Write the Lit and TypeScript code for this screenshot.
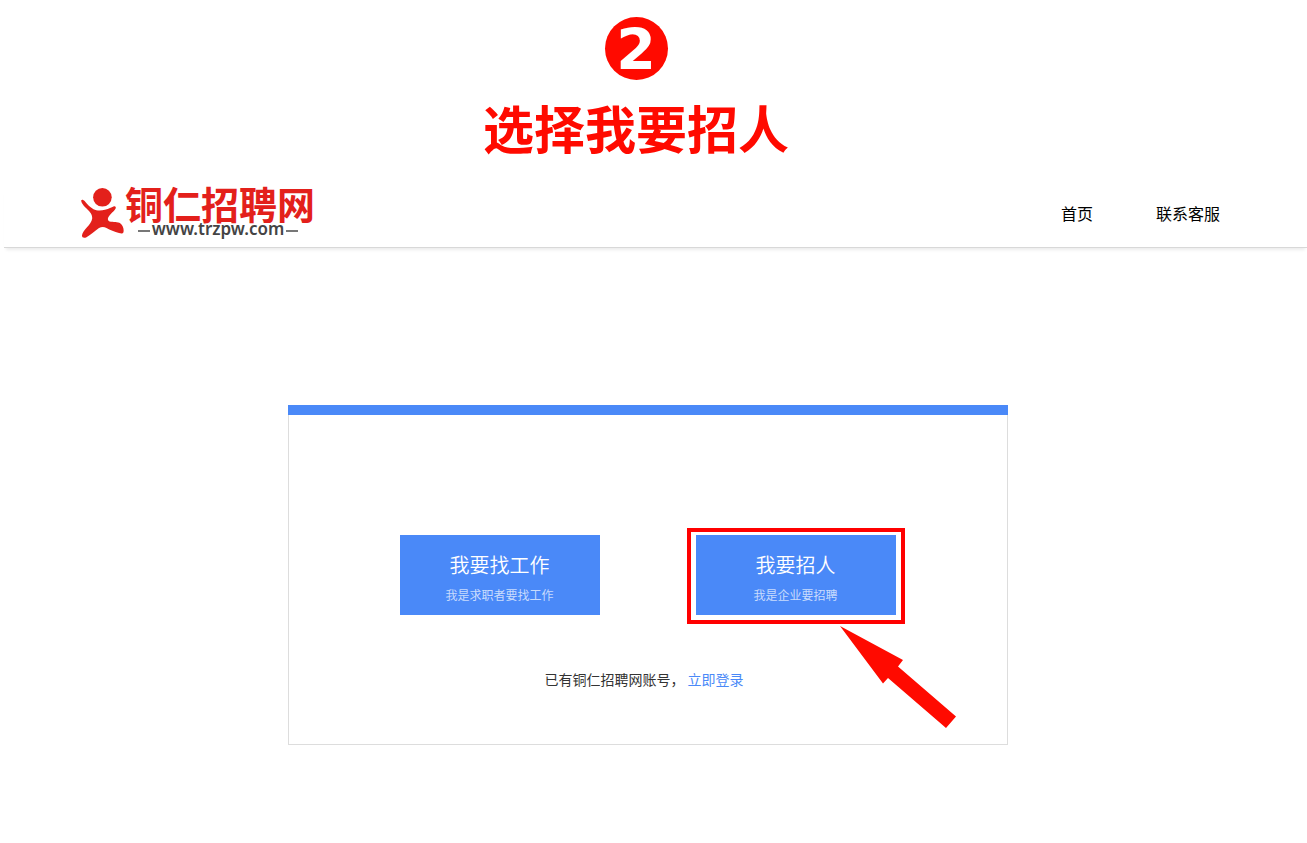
import { LitElement, html, css } from "lit";
import { customElement, property } from "lit/decorators.js";

const FONT = css`"Noto Sans CJK SC", "Liberation Sans", sans-serif`;

/** Red and grey brand mark shown at the left of the site header. */
@customElement("site-logo")
class SiteLogo extends LitElement {
  static styles = css`
    a {
      display: flex;
      align-items: flex-start;
      color: #e3201b;
      text-decoration: none;
      font-family: ${FONT};
    }
    svg {
      flex: none;
      display: block;
    }
    .words {
      display: flex;
      flex-direction: column;
      align-items: center;
      gap: 4px;
    }
    .name {
      font-size: 38px;
      line-height: 32px;
      font-weight: 700;
    }
    .domain {
      display: flex;
      align-items: center;
      gap: 2px;
      padding-right: 4px;
      font-family: "Noto Sans", sans-serif;
      font-size: 17px;
      line-height: 12px;
      font-weight: 600;
      color: #444;
    }
    .dash {
      width: 12px;
      height: 2px;
      margin-top: 4px;
      background: #777;
    }
  `;

  render() {
    return html`
      <a href="#" aria-label="铜仁招聘网">
        <svg width="44" height="52" viewBox="0 0 44 52" aria-hidden="true">
          <circle cx="21.400" cy="10.300" r="9.300" fill="#e3201b" />
          <path
            fill="#e3201b"
            d="M0.200 13.300C1 12 2.500 12.800 3.600 14C6.500 17.300 9 20.400 12.500 22.200C15.500 23.700 20 23.700 24 22.800C28 21.900 30.500 20.200 32.500 19.500C34.400 18.900 35.400 20.200 34.500 21.700C32.500 25 27.800 27.800 26.900 31.500C26.600 33.500 27.800 34.600 30 34.800C34 35.100 38 34.600 40.500 37.500C42.300 39.500 43 43 42.500 45.200C41.500 47 40 46.400 38 46C33.500 44.900 29 43 25.500 41C23 39.600 20.500 39.600 18 41C13.500 44 9.500 48 5.500 50.200C3 51.300 0.700 50.600 1 48.200C1.400 45.500 3.600 43 6 40.200C8.500 37.500 10.800 34.600 11.200 31.500C11.500 27.500 9 25 5.800 21.800C3 18.900 0.200 16.500 0.200 13.300Z"
          />
        </svg>
        <span class="words">
          <span class="name">铜仁招聘网</span>
          <span class="domain">
            <span class="dash"></span>www.trzpw.com<span class="dash"></span>
          </span>
        </span>
      </a>
    `;
  }
}

/** Large blue button with a title and a smaller explanation. */
@customElement("role-button")
class RoleButton extends LitElement {
  @property() heading = "";
  @property() note = "";

  static styles = css`
    :host {
      display: block;
    }
    button {
      display: flex;
      flex-direction: column;
      align-items: center;
      gap: 5px;
      width: 200px;
      height: 80px;
      padding: 15px 1px 0 0;
      border: 0;
      background: #4a89f8;
      color: #fff;
      font-family: ${FONT};
      cursor: pointer;
    }
    .heading {
      font-size: 20px;
      line-height: 30px;
      font-weight: 350;
    }
    .note {
      font-size: 12px;
      line-height: 20px;
      color: #c8dbfd;
    }
  `;

  render() {
    return html`
      <button type="button">
        <span class="heading">${this.heading}</span>
        <span class="note">${this.note}</span>
      </button>
    `;
  }
}

@customElement("app-root")
class AppRoot extends LitElement {
  static styles = css`
    :host {
      display: block;
      min-height: 100vh;
      background: #fff;
      color: #000;
      font-family: ${FONT};
    }
    .step {
      display: flex;
      flex-direction: column;
      align-items: center;
      padding: 17px 35px 0 0;
      color: #ff0a00;
    }
    .number {
      box-sizing: border-box;
      width: 63px;
      height: 63px;
      padding-top: 2px;
      border-radius: 50%;
      background: #ff0a00;
      color: #fff;
      font-family: "DejaVu Sans", sans-serif;
      font-size: 57px;
      line-height: 63px;
      font-weight: 700;
      text-align: center;
    }
    h1 {
      margin: 11px 0 0;
      font-size: 51px;
      line-height: 72px;
      font-weight: 700;
    }
    header {
      display: flex;
      justify-content: space-between;
      align-items: flex-start;
      height: 60px;
      margin: 24px 0 0 4px;
      padding: 0 87px 0 77px;
      border-bottom: 1px solid #d8d8d8;
      box-shadow: 0 4px 3px -2px rgba(0, 0, 0, 0.08);
    }
    nav {
      display: flex;
      gap: 63px;
      padding-top: 14px;
    }
    nav a {
      color: #000;
      font-size: 16px;
      line-height: 24px;
      text-decoration: none;
    }
    main {
      padding: 157px 11px 98px 0;
    }
    .panel {
      max-width: 720px;
      margin: 0 auto;
    }
    .bar {
      height: 10px;
      background: #4a89f8;
    }
    .card {
      padding-bottom: 53px;
      border: 1px solid #ddd;
      border-top: 0;
    }
    .roles {
      display: flex;
      justify-content: center;
      gap: 96px;
      padding-top: 120px;
    }
    .picked {
      position: relative;
    }
    .frame {
      position: absolute;
      inset: -7px -9px -9px -9px;
      border: 4px solid #f00;
      pointer-events: none;
    }
    .arrow {
      position: absolute;
      left: 144px;
      top: 91px;
    }
    .login {
      margin: 52px 8px 0 0;
      color: #333;
      font-size: 14px;
      line-height: 24px;
      text-align: center;
    }
    .login a {
      color: #4a89f8;
      text-decoration: none;
    }
  `;

  render() {
    return html`
      <section class="step">
        <div class="number">2</div>
        <h1>选择我要招人</h1>
      </section>
      <header>
        <site-logo></site-logo>
        <nav>
          <a href="#">首页</a>
          <a href="#">联系客服</a>
        </nav>
      </header>
      <main>
        <div class="panel">
          <div class="bar"></div>
          <div class="card">
            <div class="roles">
              <role-button heading="我要找工作" note="我是求职者要找工作"></role-button>
              <div class="picked">
                <role-button heading="我要招人" note="我是企业要招聘"></role-button>
                <div class="frame"></div>
                <svg class="arrow" width="117" height="103" viewBox="0 0 117 103" aria-hidden="true">
                  <path fill="#ff0a00" d="M0 0L63 34L58 40.500L116 90.500L106 102L48 52L43 57.500Z" />
                </svg>
              </div>
            </div>
            <p class="login">已有铜仁招聘网账号， <a href="#">立即登录</a></p>
          </div>
        </div>
      </main>
    `;
  }
}
